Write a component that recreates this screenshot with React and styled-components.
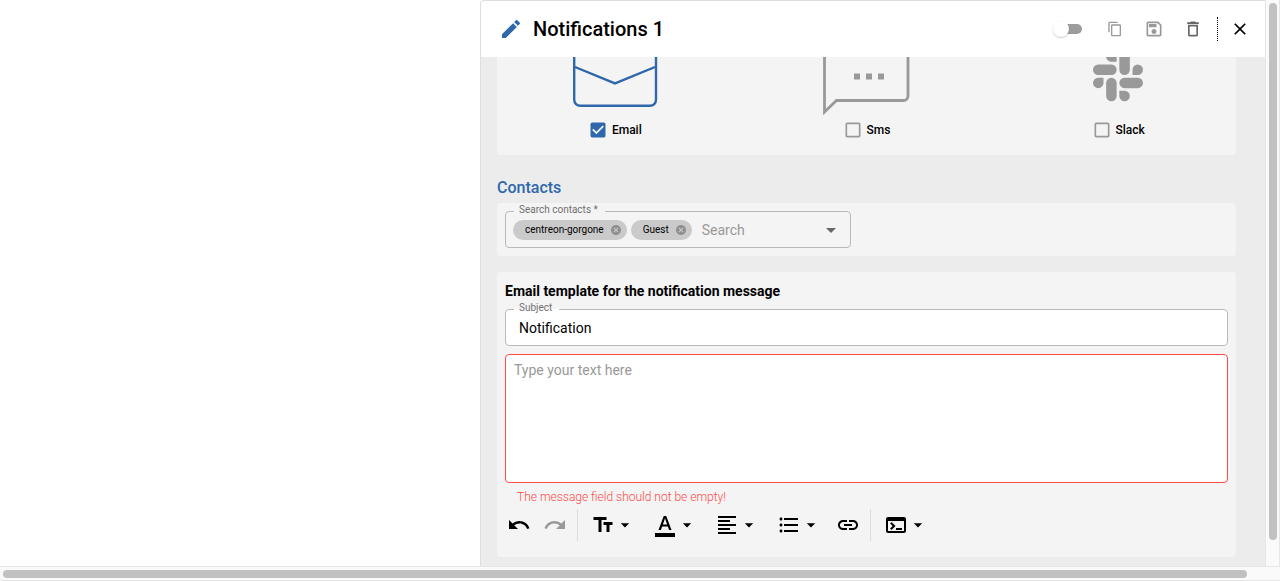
import React from "react";
import styled, { createGlobalStyle } from "styled-components";
import {
  MdArrowDropDown,
  MdCancel,
  MdCheckBox,
  MdCheckBoxOutlineBlank,
  MdClose,
  MdContentCopy,
  MdDeleteOutline,
  MdEdit,
  MdFormatAlignLeft,
  MdFormatColorText,
  MdFormatListBulleted,
  MdLink,
  MdOutlineSave,
  MdRedo,
  MdTerminal,
  MdTextFields,
  MdUndo,
} from "react-icons/md";

const blue = "#2e68aa";
const grey = "#999999";

const GlobalStyle = createGlobalStyle`
  *, *::before, *::after { box-sizing: border-box; }
  body {
    margin: 0;
    background: #fff;
    color: #000;
    font-family: Roboto, "Liberation Sans", sans-serif;
    font-size: 14px;
  }
  button, input, textarea { font: inherit; }
  svg { display: block; flex: none; }
`;

const Viewport = styled.div`
  display: grid;
  grid-template: minmax(0, 1fr) 15px / minmax(0, 1fr) 15px;
  height: 100vh;
  overflow: hidden;
`;

const Workspace = styled.div`
  display: flex;
  justify-content: flex-end;
  min-height: 0;
`;

const Panel = styled.aside`
  display: flex;
  flex-direction: column;
  width: 785px;
  border: solid #dedede;
  border-width: 1px 0 0 1px;
  border-top-left-radius: 4px;
  background: #ececec;
  overflow: hidden;
`;

const Header = styled.header`
  display: flex;
  flex: none;
  align-items: center;
  justify-content: space-between;
  height: 56px;
  padding: 0 15px 0 18px;
  background: #fff;
`;

const TitleGroup = styled.div`
  display: flex;
  align-items: center;
  gap: 10px;
  color: ${blue};
`;

const Title = styled.h1`
  margin: 0;
  color: #000;
  font-size: 20px;
  font-weight: 500;
  line-height: 24px;
`;

const HeaderActions = styled.div`
  display: flex;
  align-items: center;
  gap: 19px;
`;

const Switch = styled.input`
  appearance: none;
  display: flex;
  align-items: center;
  width: 26px;
  height: 10px;
  margin: 0 4px 0 0;
  border-radius: 5px;
  background: #9c9c9c;

  &::before {
    content: "";
    flex: none;
    width: 16px;
    height: 16px;
    margin-left: -3px;
    border-radius: 50%;
    background: #fff;
    box-shadow: 0 1px 2px rgba(0, 0, 0, 0.2);
  }
`;

const IconButton = styled.button`
  display: flex;
  align-items: center;
  justify-content: center;
  min-width: ${({ $size = 24 }) => $size}px;
  height: ${({ $size = 24 }) => $size}px;
  padding: 0;
  border: 0;
  background: none;
  color: ${({ $color = "#000" }) => $color};
`;

const CloseArea = styled.div`
  display: flex;
  align-items: center;
  height: 24px;
  margin-left: -5px;
  padding-left: 12px;
  border-left: 1px dotted #000;
`;

const Body = styled.form`
  display: flex;
  flex: 1;
  flex-direction: column;
  justify-content: flex-end;
  min-height: 0;
  padding: 0 29px 9px 16px;
  overflow: hidden;
`;

const Card = styled.section`
  flex: none;
  padding: 8px;
  border-radius: 4px;
  background: #f4f4f4;
`;

const ChannelCard = styled(Card)`
  display: grid;
  grid-template-columns: repeat(3, 1fr);
  gap: 16px;
  padding: 16px 0 15px;
`;

const Channel = styled.div`
  display: flex;
  flex-direction: column;
  align-items: center;
  gap: 5px;
`;

const CheckLabel = styled.label`
  display: flex;
  align-items: center;
  gap: 4px;
  font-size: 12px;
  font-weight: 500;
  line-height: 20px;
`;

const CheckControl = styled.span`
  display: grid;
  color: ${({ $checked }) => ($checked ? blue : grey)};

  > * {
    grid-area: 1 / 1;
    width: 20px;
    height: 20px;
    margin: 0;
  }

  input {
    opacity: 0;
  }
`;

const SectionTitle = styled.h2`
  flex: none;
  margin: 18px 0 0;
  color: ${blue};
  font-size: 16px;
  font-weight: 500;
  line-height: 30px;
`;

const TemplateCard = styled(Card)`
  margin-top: 16px;
  padding-bottom: 16px;
`;

const TemplateTitle = styled.h3`
  margin: 0 0 7px;
  font-size: 14px;
  font-weight: 700;
  line-height: 22px;
`;

const Field = styled.div`
  position: relative;
  display: flex;
  align-items: center;
  height: 37px;
  max-width: ${({ $maxWidth }) => $maxWidth || "none"};
  padding: 0 8px;
  border-radius: 4px;
  background: ${({ $filled }) => ($filled ? "#fff" : "none")};
`;

const FieldLabel = styled.label`
  position: absolute;
  top: -7px;
  left: 14px;
  color: #6f6f6f;
  font-size: 10px;
  line-height: 12px;
`;

const Outline = styled.fieldset`
  position: absolute;
  inset: -6px 0 0;
  min-width: 0;
  margin: 0;
  padding: 0 8px;
  border: 1px solid #b9b9b9;
  border-radius: 4px;
  pointer-events: none;

  legend {
    height: 12px;
    padding: 0 7px 0 5px;
    font-size: 10px;
    line-height: 12px;
    visibility: hidden;
  }
`;

const TextInput = styled.input`
  flex: 1;
  min-width: 0;
  padding: 0 6px;
  border: 0;
  outline: 0;
  background: none;
  color: #000;
  line-height: 20px;

  &::placeholder {
    color: ${grey};
  }
`;

const Chips = styled.div`
  display: flex;
  gap: 4px;
  margin-right: 4px;
`;

const Chip = styled.span`
  display: flex;
  align-items: center;
  gap: 6px;
  height: 20px;
  padding: 0 5px 0 12px;
  border-radius: 10px;
  background: #cacaca;
`;

const ChipText = styled.span`
  overflow: hidden;
  font-size: 10px;
  line-height: 10px;
`;

const Message = styled.textarea`
  display: block;
  width: 100%;
  height: 129px;
  margin-top: 8px;
  padding: 5px 8px;
  border: 1px solid #ff4a4a;
  border-radius: 4px;
  outline: 0;
  background: #fff;
  line-height: 20px;
  resize: none;

  &::placeholder {
    color: ${grey};
  }
`;

const ErrorText = styled.p`
  margin: 6px 12px 4px;
  color: #ff4a4a;
  font-size: 12px;
  font-weight: 300;
  line-height: 16px;
`;

const Toolbar = styled.div`
  display: flex;
  align-items: center;
  height: 32px;
  padding-left: 2px;
`;

const ToolGroup = styled.div`
  display: flex;
  align-items: center;
  gap: ${({ $gap }) => $gap}px;
  margin-right: ${({ $after = 0 }) => $after}px;
`;

const Divider = styled.span`
  align-self: stretch;
  width: 1px;
  margin: 0 13px 0 10px;
  background: #dedede;
`;

const VerticalScroll = styled.div`
  padding: 3px 2px 26px 3px;
  border: solid #e6e6e6;
  border-width: 0 1px;
  background: #fafafa;
`;

const HorizontalScroll = styled.div`
  grid-column: 1 / -1;
  padding: 3px 33px 2px 3px;
  border: solid #e6e6e6;
  border-width: 1px 0;
  background: #fafafa;
`;

const ScrollThumb = styled.div`
  height: 100%;
  border-radius: 4px;
  background: #c1c1c1;
`;

function EmailDrawing() {
  return (
    <svg width="96" height="96" viewBox="0 0 96 96" fill="none" stroke={blue} strokeWidth="2.4">
      <rect x="7.2" y="16" width="81.8" height="70.8" rx="6" />
      <path d="M8 48l40 16.4L88 48" />
    </svg>
  );
}

function SmsDrawing() {
  return (
    <svg width="96" height="96" viewBox="0 0 96 96" fill="none" stroke={grey} strokeWidth="2.8">
      <path d="M6.500 93V21a4.500 4.500 0 0 1 4.500-4.500h74.500A4.500 4.500 0 0 1 90 21v56a4.500 4.500 0 0 1-4.500 4.500H18.500z" />
      <path d="M36 54.500h6v6h-6zM48 54.500h6v6h-6zM60 54.500h6v6h-6z" fill={grey} stroke="none" />
    </svg>
  );
}

function SlackDrawing() {
  const arm =
    "M5.042 15.165A2.521 2.521 0 1 1 2.521 12.645h2.521zM6.313 15.165a2.521 2.521 0 0 1 5.042 0v6.313a2.521 2.521 0 0 1-5.042 0z";
  return (
    <svg width="96" height="96" viewBox="0 0 96 96" fill={grey}>
      <g transform="translate(23 32.3) scale(2.083)">
        {[0, 90, 180, 270].map((angle) => (
          <path key={angle} d={arm} transform={`rotate(${angle} 12 12)`} />
        ))}
      </g>
    </svg>
  );
}

function ChannelOption({ label, checked, drawing }) {
  const Box = checked ? MdCheckBox : MdCheckBoxOutlineBlank;
  return (
    <Channel>
      {drawing}
      <CheckLabel>
        <CheckControl $checked={checked}>
          <Box />
          <input type="checkbox" defaultChecked={checked} />
        </CheckControl>
        {label}
      </CheckLabel>
    </Channel>
  );
}

function ContactChip({ name }) {
  return (
    <Chip>
      <ChipText>{name}</ChipText>
      <IconButton type="button" $size={12} $color="#8f8f8f" aria-label={`Remove ${name}`}>
        <MdCancel size={12} />
      </IconButton>
    </Chip>
  );
}

function MenuTool({ icon: Icon, label }) {
  return (
    <IconButton type="button" aria-label={label} aria-haspopup="menu">
      <Icon size={24} />
      <MdArrowDropDown size={20} />
    </IconButton>
  );
}

export default function App() {
  return (
    <>
      <GlobalStyle />
      <Viewport>
        <Workspace>
          <Panel>
            <Header>
              <TitleGroup>
                <MdEdit size={24} />
                <Title>Notifications 1</Title>
              </TitleGroup>
              <HeaderActions>
                <Switch type="checkbox" role="switch" aria-label="Active" />
                <IconButton $size={20} $color={grey} aria-label="Duplicate">
                  <MdContentCopy size={16} />
                </IconButton>
                <IconButton $size={20} $color={grey} aria-label="Save">
                  <MdOutlineSave size={20} />
                </IconButton>
                <IconButton $size={20} $color="#666" aria-label="Delete">
                  <MdDeleteOutline size={20} />
                </IconButton>
                <CloseArea>
                  <IconButton $size={20} aria-label="Close">
                    <MdClose size={20} />
                  </IconButton>
                </CloseArea>
              </HeaderActions>
            </Header>
            <Body>
              <ChannelCard>
                <ChannelOption label="Email" checked drawing={<EmailDrawing />} />
                <ChannelOption label="Sms" drawing={<SmsDrawing />} />
                <ChannelOption label="Slack" drawing={<SlackDrawing />} />
              </ChannelCard>
              <SectionTitle>Contacts</SectionTitle>
              <Card>
                <Field $maxWidth="346px">
                  <FieldLabel htmlFor="contacts">Search contacts *</FieldLabel>
                  <Chips>
                    <ContactChip name="centreon-gorgone" />
                    <ContactChip name="Guest" />
                  </Chips>
                  <TextInput id="contacts" placeholder="Search" />
                  <IconButton type="button" $color="#666" aria-label="Open contacts">
                    <MdArrowDropDown size={24} />
                  </IconButton>
                  <Outline aria-hidden="true">
                    <legend>Search contacts *</legend>
                  </Outline>
                </Field>
              </Card>
              <TemplateCard>
                <TemplateTitle>Email template for the notification message</TemplateTitle>
                <Field $filled>
                  <FieldLabel htmlFor="subject">Subject</FieldLabel>
                  <TextInput id="subject" defaultValue="Notification" />
                  <Outline aria-hidden="true">
                    <legend>Subject</legend>
                  </Outline>
                </Field>
                <Message aria-label="Message" placeholder="Type your text here" />
                <ErrorText>The message field should not be empty!</ErrorText>
                <Toolbar role="toolbar">
                  <ToolGroup $gap={12}>
                    <IconButton type="button" aria-label="Undo">
                      <MdUndo size={24} />
                    </IconButton>
                    <IconButton type="button" $color={grey} aria-label="Redo">
                      <MdRedo size={24} />
                    </IconButton>
                  </ToolGroup>
                  <Divider />
                  <ToolGroup $gap={18} $after={15}>
                    <MenuTool icon={MdTextFields} label="Text size" />
                    <MenuTool icon={MdFormatColorText} label="Text colour" />
                    <MenuTool icon={MdFormatAlignLeft} label="Alignment" />
                    <MenuTool icon={MdFormatListBulleted} label="List" />
                  </ToolGroup>
                  <IconButton type="button" aria-label="Link">
                    <MdLink size={24} />
                  </IconButton>
                  <Divider />
                  <MenuTool icon={MdTerminal} label="Macros" />
                </Toolbar>
              </TemplateCard>
            </Body>
          </Panel>
        </Workspace>
        <VerticalScroll>
          <ScrollThumb />
        </VerticalScroll>
        <HorizontalScroll>
          <ScrollThumb />
        </HorizontalScroll>
      </Viewport>
    </>
  );
}
